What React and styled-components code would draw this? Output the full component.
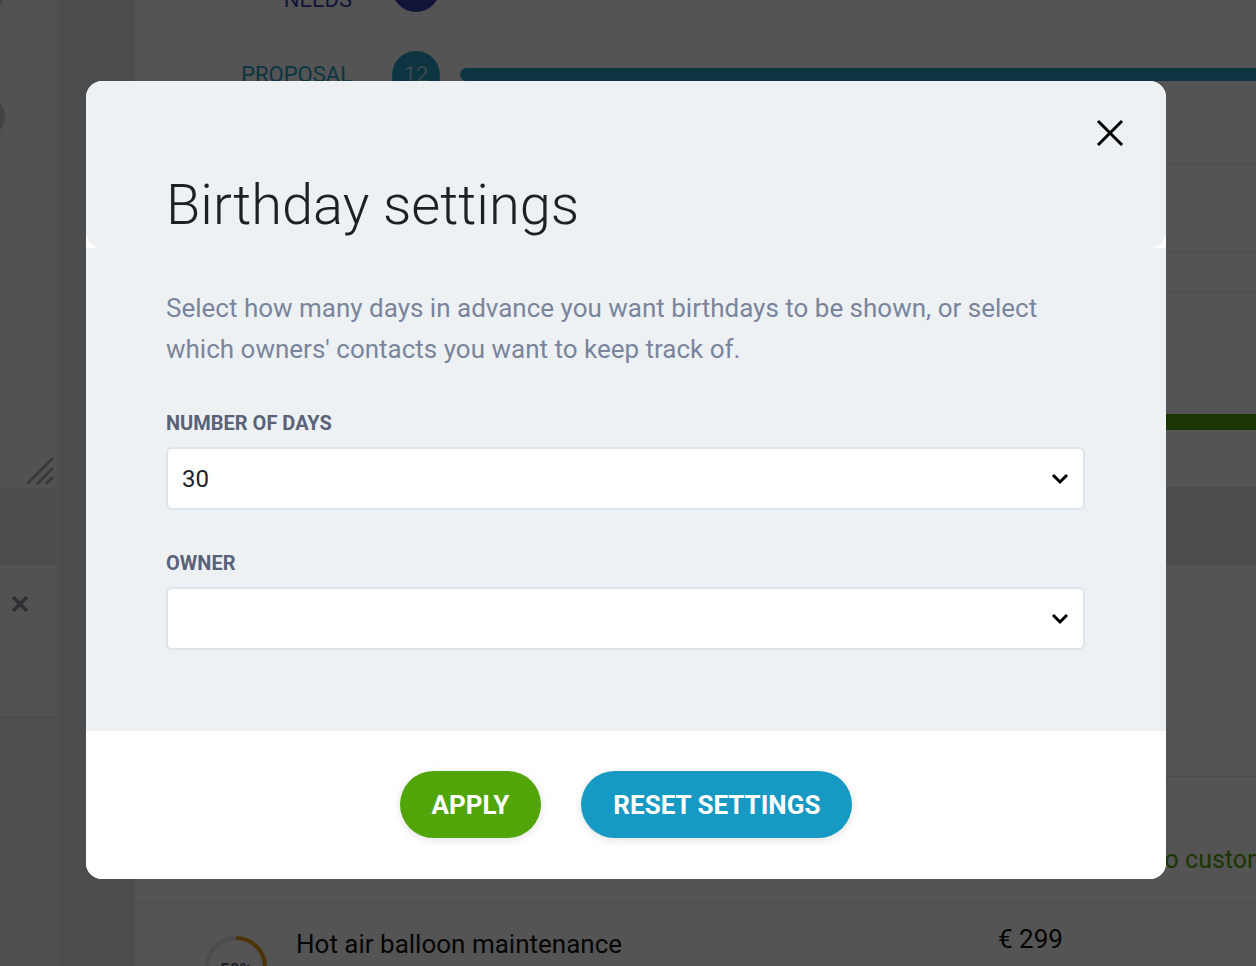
import React from 'react'
import styled, { createGlobalStyle } from 'styled-components'

const GlobalStyle = createGlobalStyle`
	html, body {
		margin: 0;
		padding: 0;
		height: 100%;
		overflow: hidden;
	}
	body {
		font-family: Roboto, "Liberation Sans", Arial, sans-serif;
		background: #fff;
	}
	* {
		box-sizing: border-box;
	}
`

export default function App() {
	return (
		<>
			<GlobalStyle />
			<Page>
				<LeftPanel>
					<PanelTop>
						<Avatar top={-33} size={48} />
						<Avatar top={82} size={40} />
						<Spacer />
						<Hatch viewBox="0 0 28 28">
							<line x1="1" y1="27" x2="27" y2="1" />
							<line x1="11" y1="27" x2="27" y2="11" />
							<line x1="20" y1="27" x2="27" y2="20" />
						</Hatch>
					</PanelTop>
					<PanelBand />
					<PanelCard>
						<CardClose viewBox="0 0 20 20">
							<line x1="3" y1="3" x2="17" y2="17" />
							<line x1="17" y1="3" x2="3" y2="17" />
						</CardClose>
					</PanelCard>
					<PanelRest />
				</LeftPanel>
				<Gutter />
				<Main>
					<Pipeline>
						<StageRow>
							<StageLabel color="#3b3fb0">Customer<br />needs</StageLabel>
							<StageCount color="#3b3fb0">7</StageCount>
						</StageRow>
						<StageRow>
							<StageLabel color="#27a2c4">Proposal</StageLabel>
							<StageCount color="#27a2c4">12</StageCount>
							<StageBar color="#27a2c4" />
						</StageRow>
					</Pipeline>
					<ListRow height={87} />
					<ListRow height={40} />
					<ListRow height={196}>
						<ProgressTrack>
							<ProgressFill />
						</ProgressTrack>
					</ListRow>
					<SectionBand />
					<ListRow height={212} />
					<ListRow height={126}>
						<Status>Proposal sent to customer</Status>
					</ListRow>
					<DealRow>
						<Ring viewBox="0 0 64 64">
							<circle cx="32" cy="32" r="29" fill="none" stroke="#e3e5ea" strokeWidth="4" />
							<circle cx="32" cy="32" r="29" fill="none" stroke="#e2a21c" strokeWidth="4" strokeDasharray="91 182" transform="rotate(-90 32 32)" />
							<text x="32" y="40" textAnchor="middle" fontSize="17" fontWeight="700" fill="#5b6379" fontFamily="Roboto, sans-serif">50%</text>
						</Ring>
						<DealTitle>Hot air balloon maintenance</DealTitle>
						<DealPrice>€ 299</DealPrice>
					</DealRow>
				</Main>
			</Page>

			<Overlay>
				<Modal>
					<Header>
						<Title>Birthday settings</Title>
						<CloseButton aria-label="Close">
							<svg width="28" height="28" viewBox="0 0 28 28">
								<line x1="2" y1="2" x2="26" y2="26" />
								<line x1="26" y1="2" x2="2" y2="26" />
							</svg>
						</CloseButton>
					</Header>
					<Body>
						<Description>
							Select how many days in advance you want birthdays to be shown, or select which owners' contacts you want to keep track of.
						</Description>
						<Field>
							<Label>Number of days</Label>
							<Select>
								<SelectValue>30</SelectValue>
								<Chevron />
							</Select>
						</Field>
						<Field>
							<Label>Owner</Label>
							<Select>
								<SelectValue></SelectValue>
								<Chevron />
							</Select>
						</Field>
					</Body>
					<Footer>
						<PillButton color="#52a508">Apply</PillButton>
						<PillButton color="#1699c2">Reset settings</PillButton>
					</Footer>
				</Modal>
			</Overlay>
		</>
	)
}

const Chevron = () => (
	<ChevronSvg viewBox="0 0 18 12">
		<polyline points="2,2 9,9 16,2" />
	</ChevronSvg>
)

/* ---------- background page ---------- */

const Page = styled.div`
	display: flex;
	height: 100vh;
	overflow: hidden;
	background: #fff;
`

const LeftPanel = styled.div`
	width: 56px;
	flex-shrink: 0;
	display: flex;
	flex-direction: column;
	overflow: hidden;
`

const PanelTop = styled.div`
	height: 488px;
	background: #f6f7f9;
	display: flex;
	flex-direction: column;
	align-items: flex-end;
	padding: 0 2px 3px 0;
`

const Avatar = styled.div`
	width: ${p => p.size}px;
	height: ${p => p.size}px;
	border-radius: 50%;
	background: #c7cad6;
	margin-top: ${p => p.top}px;
	align-self: flex-start;
	margin-left: -${p => p.size - 5}px;
	flex-shrink: 0;
`

const Spacer = styled.div`
	flex: 1;
`

const Hatch = styled.svg`
	width: 28px;
	height: 28px;
	stroke: #a7aab2;
	stroke-width: 2.5;
`

const PanelBand = styled.div`
	height: 77px;
	background: #e2e5e9;
`

const PanelCard = styled.div`
	height: 153px;
	background: #f6f7f9;
	border-top-right-radius: 8px;
	border-bottom: 2px solid #e0e3e8;
	padding: 29px 0 0 10px;
`

const CardClose = styled.svg`
	width: 20px;
	height: 20px;
	stroke: #8e929b;
	stroke-width: 3.5;
`

const PanelRest = styled.div`
	flex: 1;
	background: #eef0f2;
`

const Gutter = styled.div`
	width: 79px;
	flex-shrink: 0;
	background: #e3e5e8;
	border-left: 6px solid #e9ebee;
`

const Main = styled.div`
	flex: 1;
	display: flex;
	flex-direction: column;
	min-width: 0;
`

const Pipeline = styled.div`
	margin-top: -56px;
	height: 221px;
	flex-shrink: 0;
	border-bottom: 1px solid #e3e6ea;
`

const StageRow = styled.div`
	height: 87px;
	display: flex;
	align-items: center;
`

const StageLabel = styled.div`
	width: 217px;
	text-align: right;
	font-size: 22px;
	line-height: 24px;
	text-transform: uppercase;
	color: ${p => p.color};
`

const StageCount = styled.div`
	width: 48px;
	height: 48px;
	margin-left: 40px;
	border-radius: 50%;
	background: ${p => p.color};
	color: rgba(255, 255, 255, 0.6);
	font-size: 22px;
	display: flex;
	align-items: center;
	justify-content: center;
`

const StageBar = styled.div`
	flex: 1;
	height: 13px;
	margin-left: 20px;
	border-radius: 7px 0 0 7px;
	background: ${p => p.color};
`

const ListRow = styled.div`
	height: ${p => p.height}px;
	flex-shrink: 0;
	border-bottom: 1px solid #e3e6ea;
`

const ProgressTrack = styled.div`
	padding: 122px 0 0 400px;
`

const ProgressFill = styled.div`
	height: 16px;
	background: #52a508;
`

const SectionBand = styled.div`
	height: 77px;
	flex-shrink: 0;
	background: #e6e9ec;
`

const Status = styled.div`
	padding: 68px 0 0 862px;
	font-size: 25px;
	line-height: 30px;
	color: #52a508;
	white-space: nowrap;
`

const DealRow = styled.div`
	display: flex;
	align-items: flex-start;
	padding-left: 69px;
`

const Ring = styled.svg`
	width: 64px;
	height: 64px;
	margin-top: 32px;
	flex-shrink: 0;
`

const DealTitle = styled.div`
	margin: 26px 0 0 28px;
	font-size: 26px;
	line-height: 30px;
	color: #111;
	width: 702px;
	flex-shrink: 0;
`

const DealPrice = styled.div`
	margin-top: 21px;
	font-size: 26px;
	line-height: 30px;
	color: #111;
	white-space: nowrap;
`

/* ---------- modal ---------- */

const Overlay = styled.div`
	position: fixed;
	inset: 0;
	background: rgba(0, 0, 0, 0.67);
	display: flex;
	justify-content: center;
	align-items: flex-start;
	padding: 81px 4px 0 0;
`

const Modal = styled.div`
	width: 1080px;
	background: #fff;
	border-radius: 16px;
	overflow: hidden;
	font-family: Roboto, "Liberation Sans", Arial, sans-serif;
`

const Header = styled.div`
	position: relative;
	height: 167px;
	padding: 91px 80px 0;
	background: #edf1f4;
	border-radius: 16px;
`

const Title = styled.h1`
	margin: 0;
	font-size: 56px;
	line-height: 1.2;
	font-weight: 300;
	color: #1d2026;
`

const CloseButton = styled.button`
	position: absolute;
	top: 38px;
	right: 42px;
	width: 28px;
	height: 28px;
	padding: 0;
	border: none;
	background: none;
	cursor: pointer;

	svg {
		display: block;
		stroke: #000;
		stroke-width: 3;
	}
`

const Body = styled.div`
	background: #edf1f4;
	padding: 40px 80px 81px;
`

const Description = styled.p`
	margin: 0;
	font-size: 26px;
	line-height: 41px;
	color: #7a859c;
	max-width: 900px;
`

const Field = styled.div`
	margin-top: 41px;
`

const Label = styled.div`
	font-size: 20px;
	line-height: 24px;
	font-weight: 700;
	text-transform: uppercase;
	color: #5a6278;
	margin-bottom: 12px;
`

const Select = styled.div`
	height: 63px;
	width: 919px;
	background: #fff;
	border: 2px solid #dfe3ea;
	border-radius: 6px;
	display: flex;
	align-items: center;
	padding: 0 14px 0 14px;
`

const SelectValue = styled.div`
	flex: 1;
	font-size: 24px;
	color: #1e2228;
`

const ChevronSvg = styled.svg`
	width: 18px;
	height: 12px;
	fill: none;
	stroke: #000;
	stroke-width: 3;
`

const Footer = styled.div`
	height: 148px;
	background: #fff;
	display: flex;
	justify-content: center;
	align-items: flex-start;
	padding-top: 40px;
	gap: 40px;
`

const PillButton = styled.button`
	height: 67px;
	padding: 0 32px;
	border: none;
	border-radius: 34px;
	background: ${p => p.color};
	color: #fff;
	font-family: Roboto, "Liberation Sans", Arial, sans-serif;
	font-size: 26px;
	font-weight: 700;
	text-transform: uppercase;
	box-shadow: 0 2px 8px rgba(0, 0, 0, 0.12);
	cursor: pointer;
`
